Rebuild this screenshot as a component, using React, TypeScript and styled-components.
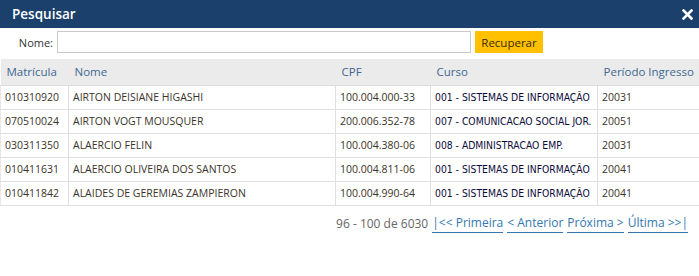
import React from 'react';
import styled, { createGlobalStyle } from 'styled-components';

const GlobalStyle = createGlobalStyle`
    html, body {
        margin : 0;
        padding : 0;
        background : #ffffff;
    }
    body {
        font-family : "Open Sans", "Noto Sans", sans-serif;
    }
`;

const Dialog = styled.div`
    width : 699px;
    height : 276px;
    box-sizing : border-box;
    background : #ffffff;
    display : flex;
    flex-direction : column;
`;

const TitleBar = styled.div`
    height : 28px;
    background : #1a406b;
    color : #ffffff;
    display : flex;
    align-items : center;
    justify-content : space-between;
    padding : 0 6px 0 12px;
    box-sizing : border-box;
    & > .title {
        font-size : 13.5px;
        font-weight : 600;
    }
`;

const CloseButton = styled.button`
    border : none;
    background : transparent;
    padding : 0;
    width : 12px;
    height : 12px;
    display : flex;
    align-items : center;
    justify-content : center;
    cursor : pointer;
`;

const SearchRow = styled.div`
    display : flex;
    align-items : center;
    height : 26px;
    margin-top : 1px;
    & > label {
        width : 53px;
        text-align : right;
        font-size : 11px;
        color : #333333;
        padding-right : 4px;
    }
`;

const NameInput = styled.input`
    width : 414px;
    height : 22px;
    box-sizing : border-box;
    border : 1px solid #c8c8c8;
    outline : none;
    font-size : 11px;
    padding : 0 4px;
`;

const RecoverButton = styled.button`
    margin-left : 4px;
    width : 68px;
    height : 22px;
    border : none;
    background : #ffc000;
    color : #3a2a00;
    font-family : "Open Sans", sans-serif;
    font-size : 11.5px;
    padding : 0;
    cursor : pointer;
`;

const Table = styled.table`
    margin-top : 4px;
    width : 699px;
    border-collapse : collapse;
    table-layout : fixed;
`;

const HeadCell = styled.th<{ $w: number }>`
    width : ${({ $w }) => `${$w}px`};
    box-sizing : border-box;
    height : 26px;
    background : #ebebeb;
    color : #3f6894;
    font-weight : 400;
    font-size : 11.5px;
    text-align : left;
    padding : 0 0 0 6px;
    border-bottom : 1px solid #dddddd;
    white-space : nowrap;
    overflow : visible;
`;

const Cell = styled.td<{ $mono?: boolean }>`
    height : 24px;
    box-sizing : border-box;
    padding : 0 0 0 4px;
    border : 1px solid #e0e0e0;
    font-size : ${({ $mono }) => ($mono ? '10.3px' : '10.5px')};
    font-family : ${({ $mono }) => ($mono ? '"DejaVu Sans Condensed", "DejaVu Sans", sans-serif' : '"Open Sans", sans-serif')};
    color : ${({ $mono }) => ($mono ? '#0c0c3a' : '#3a3328')};
    white-space : nowrap;
    overflow : hidden;
    &:first-child { border-left : 1px solid #e8e8e8; }
    &:last-child { border-right : none; }
`;

const Pager = styled.div`
    display : flex;
    justify-content : flex-end;
    align-items : center;
    gap : 4px;
    padding : 8px 11px 0 0;
    font-size : 12px;
    & > .count {
        color : #666666;
    }
`;

const PageLink = styled.a`
    color : #3377b0;
    text-decoration : none;
    border-bottom : 1px solid #3377b0;
    padding-bottom : 1px;
    cursor : pointer;
`;

const columns = [
    { label: 'Matrícula', w: 68 },
    { label: 'Nome', w: 267 },
    { label: 'CPF', w: 95 },
    { label: 'Curso', w: 167 },
    { label: 'Período Ingresso', w: 102 },
];

const rows = [
    ['010310920', 'AIRTON DEISIANE HIGASHI', '100.004.000-33', '001 - SISTEMAS DE INFORMAÇÃO', '20031'],
    ['070510024', 'AIRTON VOGT MOUSQUER', '200.006.352-78', '007 - COMUNICACAO SOCIAL JOR.', '20051'],
    ['030311350', 'ALAERCIO FELIN', '100.004.380-06', '008 - ADMINISTRACAO EMP.', '20031'],
    ['010411631', 'ALAERCIO OLIVEIRA DOS SANTOS', '100.004.811-06', '001 - SISTEMAS DE INFORMAÇÃO', '20041'],
    ['010411842', 'ALAIDES DE GEREMIAS ZAMPIERON', '100.004.990-64', '001 - SISTEMAS DE INFORMAÇÃO', '20041'],
];

function App() {
    return (
        <>
            <GlobalStyle />
            <Dialog>
                <TitleBar>
                    <span className='title'>Pesquisar</span>
                    <CloseButton aria-label='Fechar'>
                        <svg width='11' height='11' viewBox='0 0 11 11'>
                            <path d='M1.5 1.5 L9.5 9.5 M9.5 1.5 L1.5 9.5' stroke='#ffffff' strokeWidth='2.6' strokeLinecap='square' />
                        </svg>
                    </CloseButton>
                </TitleBar>
                <SearchRow>
                    <label>Nome:</label>
                    <NameInput />
                    <RecoverButton>Recuperar</RecoverButton>
                </SearchRow>
                <Table>
                    <thead>
                        <tr>
                            {columns.map(c => (
                                <HeadCell key={c.label} $w={c.w}>{c.label}</HeadCell>
                            ))}
                        </tr>
                    </thead>
                    <tbody>
                        {rows.map(r => (
                            <tr key={r[0]}>
                                <Cell>{r[0]}</Cell>
                                <Cell>{r[1]}</Cell>
                                <Cell>{r[2]}</Cell>
                                <Cell $mono>{r[3]}</Cell>
                                <Cell>{r[4]}</Cell>
                            </tr>
                        ))}
                    </tbody>
                </Table>
                <Pager>
                    <span className='count'>96 - 100 de 6030</span>
                    <PageLink>|&lt;&lt; Primeira</PageLink>
                    <PageLink>&lt; Anterior</PageLink>
                    <PageLink>Próxima &gt;</PageLink>
                    <PageLink>Última &gt;&gt;|</PageLink>
                </Pager>
            </Dialog>
        </>
    );
}

export default App;
